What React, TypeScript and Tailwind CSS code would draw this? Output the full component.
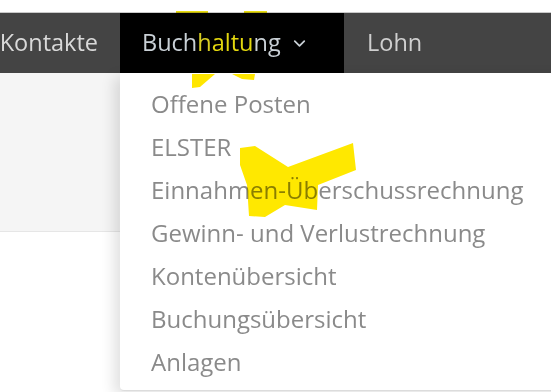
import { ChevronDown } from 'lucide-react'

const items = [
  'Offene Posten',
  'ELSTER',
  'Einnahmen-Überschussrechnung',
  'Gewinn- und Verlustrechnung',
  'Kontenübersicht',
  'Buchungsübersicht',
  'Anlagen',
]

export default function App() {
  return (
    <div
      className="relative w-full h-[392px] overflow-hidden bg-white"
      style={{ fontFamily: '"Open Sans", "Liberation Sans", sans-serif' }}
    >
      <div className="h-[12px]" />

      {/* Hauptnavigation */}
      <nav className="flex h-[61px] border-t border-[#c9c9c9] bg-[#444444] text-[23.5px]">
        <div className="flex w-[120px] shrink-0 items-center justify-end whitespace-nowrap pr-[22px] text-[#d9d9d9]">
          Kontakte
        </div>
        <div className="flex w-[224px] shrink-0 items-center whitespace-nowrap bg-black pl-[22px] text-[#c9d0d6]">
          <span>
            Buch<span className="text-[#d8ce22]">h</span>
            <span className="text-[#e3d70e]">altu</span>ng
          </span>
          <ChevronDown className="ml-[9px] h-[19px] w-[19px] text-[#c9d0d6]" strokeWidth={2.2} />
        </div>
        <div className="flex items-center pl-[23px] text-[#cfcfcf]">Lohn</div>
      </nav>

      <div className="h-[159px] border-b border-[#e6e6e6] bg-[#f5f5f5]" />

      {/* Dropdown */}
      <div className="absolute left-[120px] top-[73px] w-[460px] rounded-bl-[4px] border-b border-[#dcdcdc] bg-white pt-[9px] pb-[7px] shadow-[-6px_4px_14px_rgba(0,0,0,0.12)]">
        {items.map((item) => (
          <div key={item} className="h-[43px] whitespace-nowrap pl-[31px] text-[24px] leading-[43px] text-[#8a8a8a]">
            {item}
          </div>
        ))}
      </div>

      {/* Markierungen */}
      <svg className="pointer-events-none absolute left-0 top-0 mix-blend-multiply" width="551" height="392">
        <rect x="176" y="11" width="32" height="2" fill="#e8dc10" />
        <rect x="244" y="11" width="23" height="2" fill="#e8dc10" />
        <polygon points="192,74 215,74 200,87 192,88" fill="#ffe600" />
        <polygon points="232,74 255,74 254,80 242,79" fill="#ffe600" />
        <polygon
          points="240,148 255,146 288,167 353,143 356,170 318,185 317,210 285,205 265,217 249,216 247,185 240,165"
          fill="#ffe800"
        />
      </svg>
    </div>
  )
}
